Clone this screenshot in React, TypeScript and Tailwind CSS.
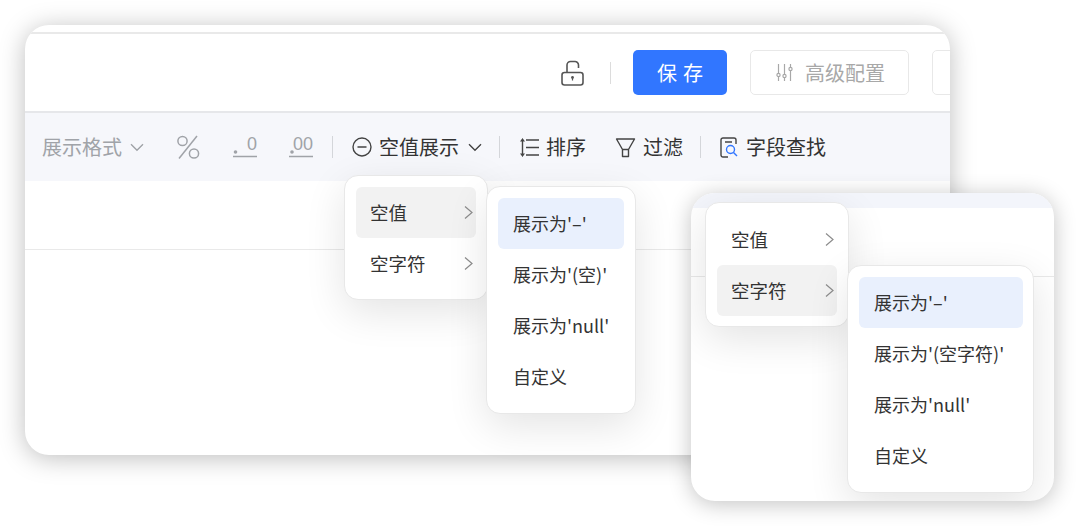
import React from "react";

const FONT = "[font-family:'Noto_Sans_CJK_SC',sans-serif]";

const Chevron = () => (
  <svg width="11" height="15" viewBox="0 0 11 15" fill="none" stroke="#8c8c8c" strokeWidth="1.2">
    <path d="M2 1.5 9 7.5 2 13.5" />
  </svg>
);

const Down = ({ color, w = 14 }: { color: string; w?: number }) => (
  <svg width={w} height="9" viewBox="0 0 14 9" fill="none" stroke={color} strokeWidth="1.4">
    <path d="M1 1.2 7 7.2 13 1.2" />
  </svg>
);

const Divider = ({ ml, mr }: { ml: string; mr: string }) => (
  <div className={`h-[22px] w-[1px] shrink-0 bg-[#d4d6da] ${ml} ${mr}`} />
);

function MenuRow({ label, active }: { label: string; active?: boolean }) {
  return (
    <div
      className={
        active
          ? "flex h-[51px] w-[120px] items-center justify-between rounded-[6px] bg-[#f2f2f2] pl-[14px] pr-[2px] text-[18.5px] text-[#333]"
          : "flex h-[51px] w-[120px] items-center justify-between rounded-[6px] pl-[14px] pr-[2px] text-[18.5px] text-[#333]"
      }
    >
      <span>{label}</span>
      <Chevron />
    </div>
  );
}

function SubMenu({ items, width }: { items: string[]; width: string }) {
  return (
    <div className={`flex flex-col ${width}`}>
      {items.map((t, i) => (
        <div
          key={t}
          className={
            i === 0
              ? "flex h-[51px] items-center rounded-[6px] bg-[#e9f0fd] pl-[15px] text-[18px] text-[#333] whitespace-nowrap"
              : "flex h-[51px] items-center rounded-[6px] pl-[15px] text-[18px] text-[#333] whitespace-nowrap"
          }
        >
          {t}
        </div>
      ))}
    </div>
  );
}

const menuShell =
  "absolute rounded-[14px] border border-[#e8e8e8] bg-white shadow-[0_12px_40px_rgba(0,0,0,0.11)]";

export default function App() {
  return (
    <div className={`relative h-[527px] w-[1080px] overflow-hidden bg-white ${FONT}`}>
      {/* main window */}
      <div className="absolute left-[25px] top-[25px] h-[430px] w-[925px] overflow-hidden rounded-[24px] bg-white shadow-[0_3px_26px_rgba(0,0,0,0.26)]">
        <div className="h-[7px]" />
        <div className="h-[2px] bg-[#e9e9e9]" />
        {/* header */}
        <div className="flex h-[79px] items-center border-b-2 border-[#e6e7ea] pl-[536px]">
          <svg className="shrink-0" width="23" height="26" viewBox="0 0 23 26" fill="none" stroke="#555" strokeWidth="1.6">
            <rect x="1" y="12.5" width="21" height="12.5" rx="2.5" />
            <path d="M6 12.5V5a3.5 3.5 0 0 1 3.5-3.5h4A3.5 3.5 0 0 1 17.5 5v3" />
            <circle cx="11.5" cy="17.5" r="1.4" fill="#555" stroke="none" />
            <path d="M11.5 18v2.5" strokeWidth="1.2" />
          </svg>
          <div className="ml-[26px] mr-[22px] h-[22px] w-[1px] shrink-0 bg-[#dcdcdc]" />
          <button className="flex h-[45px] w-[94px] shrink-0 items-center justify-center rounded-[5px] bg-[#3176ff] pl-[6px] text-[20px] tracking-[6px] text-white">
            保存
          </button>
          <div className="ml-[23px] flex h-[45px] w-[159px] shrink-0 items-center rounded-[5px] border border-[#e8e8e8] pl-[25px] text-[20px] text-[#a8a8a8]">
            <svg className="shrink-0" width="17" height="19" viewBox="0 0 17 19" fill="none" stroke="#a8a8a8" strokeWidth="1.2">
              <path d="M2.5 1v17M8.5 1v17M14.5 1v17" />
              <circle cx="2.5" cy="12" r="1.6" fill="#fff" />
              <circle cx="8.5" cy="13" r="1.6" fill="#fff" />
              <circle cx="14.5" cy="6" r="1.6" fill="#fff" />
            </svg>
            <span className="ml-[12px] whitespace-nowrap">高级配置</span>
          </div>
          <div className="ml-[23px] h-[45px] w-[60px] shrink-0 rounded-[5px] border border-[#e8e8e8]" />
        </div>
        {/* toolbar */}
        <div className="flex h-[68px] items-center bg-[#f6f7fb] pl-[17px] text-[20px] text-[#333]">
          <span className="w-[80px] whitespace-nowrap text-[#a0a3a8]">展示格式</span>
          <span className="ml-[8px]"><Down color="#a0a3a8" /></span>
          <svg className="ml-[32px]" width="24" height="24" viewBox="0 0 24 24" fill="none" stroke="#a0a3a8" strokeWidth="1.5">
            <circle cx="6.5" cy="6" r="4.6" />
            <circle cx="18" cy="18.5" r="4.6" />
            <path d="M21 1 3 23.5" />
          </svg>
          <svg className="ml-[33px]" width="24" height="24" viewBox="0 0 24 24" fill="none">
            <circle cx="2.5" cy="17" r="1.8" fill="#a0a3a8" />
            <text x="14" y="15" fontSize="18" fill="#a0a3a8" fontFamily="Liberation Sans">0</text>
            <path d="M0 21.5h24" stroke="#a0a3a8" strokeWidth="1.4" />
          </svg>
          <svg className="ml-[32px]" width="24" height="24" viewBox="0 0 24 24" fill="none">
            <circle cx="3" cy="17" r="1.8" fill="#a0a3a8" />
            <text x="4" y="15" fontSize="18" fill="#a0a3a8" fontFamily="Liberation Sans">00</text>
            <path d="M0 21.5h24" stroke="#a0a3a8" strokeWidth="1.4" />
          </svg>
          <Divider ml="ml-[19px]" mr="mr-[19px]" />
          <svg width="20" height="20" viewBox="0 0 20 20" fill="none" stroke="#444" strokeWidth="1.4">
            <circle cx="10" cy="10" r="9" />
            <path d="M5.5 10h9" />
          </svg>
          <span className="ml-[7px] w-[80px] whitespace-nowrap">空值展示</span>
          <span className="ml-[9px]"><Down color="#444" /></span>
          <Divider ml="ml-[17px]" mr="mr-[19px]" />
          <svg width="21" height="21" viewBox="0 0 21 21" fill="none" stroke="#444" strokeWidth="1.4">
            <path d="M7 3h13M7 10.5h13M7 18h13M3.5 3v15" />
            <path d="M1 4.5l2.5-3.5L6 4.5zM1 16.5l2.5 3.5L6 16.5z" fill="#444" stroke="none" />
          </svg>
          <span className="ml-[6px] w-[40px] whitespace-nowrap">排序</span>
          <svg className="ml-[29px]" width="21" height="21" viewBox="0 0 21 21" fill="none" stroke="#444" strokeWidth="1.4" strokeLinejoin="round">
            <path d="M1.5 2h18L13.5 12.5V19.5h-6V12.5z" />
            <path d="M7.5 12.5h6" />
          </svg>
          <span className="ml-[7px] w-[40px] whitespace-nowrap">过滤</span>
          <Divider ml="ml-[17px]" mr="mr-[19px]" />
          <svg width="19" height="21" viewBox="0 0 19 21" fill="none" stroke="#444" strokeWidth="1.4">
            <path d="M8 20H3a2 2 0 0 1-2-2V3a2 2 0 0 1 2-2h11a2 2 0 0 1 2 2v4" />
            <path d="M5 5h7" />
            <circle cx="10.5" cy="12.5" r="4" stroke="#3176ff" />
            <path d="M13.5 15.5 17 19" stroke="#3176ff" />
          </svg>
          <span className="ml-[7px] w-[80px] whitespace-nowrap">字段查找</span>
        </div>
        {/* empty table head */}
        <div className="h-[69px] border-b border-[#e9e9e9]" />
      </div>

      {/* first menus */}
      <div className={`${menuShell} left-[344px] top-[175px] h-[125px] w-[144px] p-[11px]`}>
        <MenuRow label="空值" active />
        <MenuRow label="空字符" />
      </div>
      <div className={`${menuShell} left-[486px] top-[186px] h-[228px] w-[150px] p-[11px]`}>
        <SubMenu width="w-[126px]" items={["展示为'–'", "展示为'(空)'", "展示为'null'", "自定义"]} />
      </div>

      {/* zoomed card */}
      <div className="absolute left-[691px] top-[193px] h-[308px] w-[363px] overflow-hidden rounded-[24px] bg-white shadow-[0_3px_22px_rgba(0,0,0,0.24)]">
        <div className="h-[15px] bg-[#f3f5fb]" />
        <div className="h-[69px] border-b border-[#e9e9e9]" />
        <div className={`${menuShell} left-[14px] top-[9px] h-[125px] w-[144px] p-[11px]`}>
          <MenuRow label="空值" />
          <MenuRow label="空字符" active />
        </div>
        <div className={`${menuShell} left-[156px] top-[72px] h-[228px] w-[187px] p-[11px]`}>
          <SubMenu width="w-[164px]" items={["展示为'–'", "展示为'(空字符)'", "展示为'null'", "自定义"]} />
        </div>
      </div>
    </div>
  );
}
